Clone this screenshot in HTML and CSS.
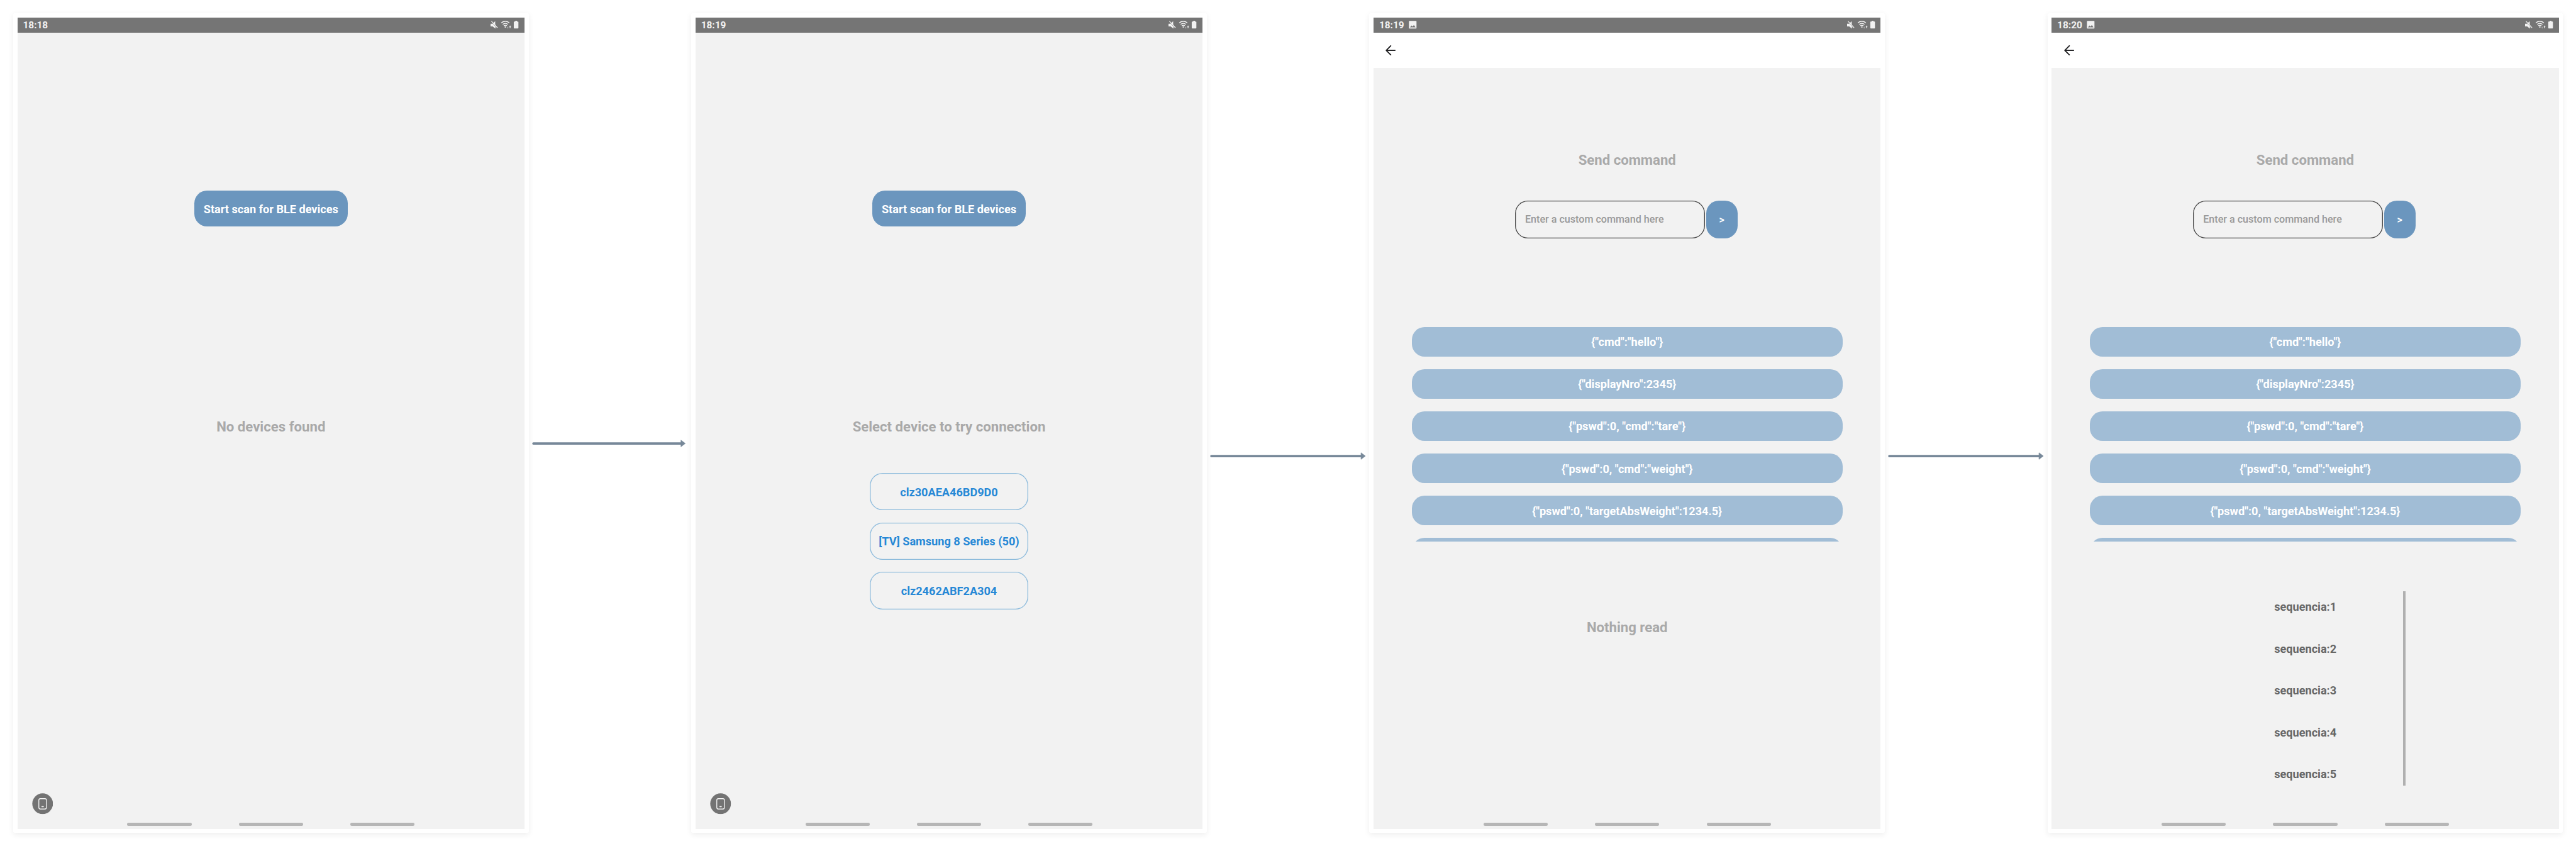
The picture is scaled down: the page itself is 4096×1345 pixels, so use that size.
FILE: index.html
```html
<!DOCTYPE html>
<html lang="en">
<head>
<meta charset="utf-8">
<title>BLE device flow</title>
<link rel="stylesheet" href="styles.css">
</head>
<body>
<svg class="defs" aria-hidden="true">
  <symbol id="i-status" viewBox="0 0 68 20">
    <path d="M0 7h4.5L11 1.2V11l5.2 5.3-1.2 1.2L11.5 14v4.5L5 13.5H0z" fill="#f2f2f2"/>
    <path d="M1.2 1.6L16 17.4" stroke="#757575" stroke-width="1.3"/>
    <path d="M2 .8L16.6 16.6" stroke="#f2f2f2" stroke-width="1.8"/>
    <g fill="none" stroke="#f2f2f2" stroke-width="2">
      <path d="M25.5 5.2a13 13 0 0 1 19 0"/>
      <path d="M28.8 8.8a8.6 8.6 0 0 1 12.4 0"/>
      <path d="M31.6 12a4.8 4.8 0 0 1 6.8 0"/>
    </g>
    <circle cx="35" cy="14.8" r="1.7" fill="#f2f2f2"/>
    <path d="M39.6 14h2v2h1.4l-2.4 2.6-2.4-2.6h1.4z" fill="#a9a9a9"/>
    <path d="M46.3 11l2.6 2.8h-1.6v3.6h-2v-3.6h-1.6z" fill="#f2f2f2"/>
    <path d="M58.6 0h4v1.8h2.2a1.2 1.2 0 0 1 1.2 1.2v14a1.2 1.2 0 0 1-1.2 1.2h-8.6A1.2 1.2 0 0 1 55 17V3a1.2 1.2 0 0 1 1.2-1.2h2.4z" fill="#f2f2f2"/>
  </symbol>
  <symbol id="i-image" viewBox="0 0 20 20">
    <path fill="#f2f2f2" fill-rule="evenodd" d="M2 .5h16a1.5 1.5 0 0 1 1.5 1.5v16a1.5 1.5 0 0 1-1.5 1.5H2A1.5 1.5 0 0 1 .5 18V2A1.5 1.5 0 0 1 2 .5zM3 16.5h14l-4.2-6-3.1 3.9L7 11.6z"/>
  </symbol>
  <symbol id="i-back" viewBox="0 0 24 24">
    <path d="M22.6 12H2M12.4 1.3L1.8 12l10.6 10.7" fill="none" stroke="#1c1c1e" stroke-width="2.7" stroke-linecap="round" stroke-linejoin="round"/>
  </symbol>
  <symbol id="i-rotate" viewBox="0 0 50 50">
    <circle cx="25" cy="25" r="24.5" fill="#737373"/>
    <rect x="16" y="13" width="18" height="24.6" rx="3.6" fill="none" stroke="#f4f4f4" stroke-width="2"/>
    <rect x="22.2" y="30.4" width="5.6" height="2.7" rx="1" fill="#f4f4f4"/>
  </symbol>
  <symbol id="i-arrow" viewBox="0 0 364 18">
    <path d="M3 9H354" stroke="#778899" stroke-width="5.6" stroke-linecap="round"/>
    <path d="M352.6 1.2L363 9l-10.4 7.8z" fill="#778899" stroke="#778899" stroke-width="1" stroke-linejoin="round"/>
  </symbol>
  <symbol id="i-arrow-long" viewBox="0 0 369 18">
    <path d="M3 9H359" stroke="#778899" stroke-width="5.6" stroke-linecap="round"/>
    <path d="M357.6 1.2L368 9l-10.4 7.8z" fill="#778899" stroke="#778899" stroke-width="1" stroke-linejoin="round"/>
  </symbol>
</svg>
<main class="flow">
  <section class="card"><div class="screen">
    <header class="status"><span>18:18</span><svg class="status-icons"><use href="#i-status"/></svg></header>
    <div class="body scan">
      <button class="primary">Start scan for BLE devices</button>
      <h2 class="title">No devices found</h2>
      <svg class="rotate"><use href="#i-rotate"/></svg>
    </div>
    <footer class="nav"><i></i><i></i><i></i></footer>
  </div></section>

  <svg class="link link-first"><use href="#i-arrow"/></svg>

  <section class="card"><div class="screen">
    <header class="status"><span>18:19</span><svg class="status-icons"><use href="#i-status"/></svg></header>
    <div class="body scan">
      <button class="primary">Start scan for BLE devices</button>
      <h2 class="title">Select device to try connection</h2>
      <div class="devices">
        <button class="device">clz30AEA46BD9D0</button>
        <button class="device">[TV] Samsung 8 Series (50)</button>
        <button class="device">clz2462ABF2A304</button>
      </div>
      <svg class="rotate"><use href="#i-rotate"/></svg>
    </div>
    <footer class="nav"><i></i><i></i><i></i></footer>
  </div></section>

  <svg class="link"><use href="#i-arrow-long"/></svg>

  <section class="card"><div class="screen">
    <header class="status"><span>18:19</span><svg class="status-image"><use href="#i-image"/></svg><svg class="status-icons"><use href="#i-status"/></svg></header>
    <div class="appbar"><svg class="back"><use href="#i-back"/></svg></div>
    <div class="body command">
      <h2 class="title">Send command</h2>
      <div class="entry"><div class="field">Enter a custom command here</div><button class="send">&gt;</button></div>
      <div class="presets">
        <button class="preset">{"cmd":"hello"}</button>
        <button class="preset">{"displayNro":2345}</button>
        <button class="preset">{"pswd":0, "cmd":"tare"}</button>
        <button class="preset">{"pswd":0, "cmd":"weight"}</button>
        <button class="preset">{"pswd":0, "targetAbsWeight":1234.5}</button>
        <button class="preset"></button>
      </div>
      <h2 class="title empty">Nothing read</h2>
    </div>
    <footer class="nav"><i></i><i></i><i></i></footer>
  </div></section>

  <svg class="link"><use href="#i-arrow-long"/></svg>

  <section class="card"><div class="screen">
    <header class="status"><span>18:20</span><svg class="status-image"><use href="#i-image"/></svg><svg class="status-icons"><use href="#i-status"/></svg></header>
    <div class="appbar"><svg class="back"><use href="#i-back"/></svg></div>
    <div class="body command">
      <h2 class="title">Send command</h2>
      <div class="entry"><div class="field">Enter a custom command here</div><button class="send">&gt;</button></div>
      <div class="presets">
        <button class="preset">{"cmd":"hello"}</button>
        <button class="preset">{"displayNro":2345}</button>
        <button class="preset">{"pswd":0, "cmd":"tare"}</button>
        <button class="preset">{"pswd":0, "cmd":"weight"}</button>
        <button class="preset">{"pswd":0, "targetAbsWeight":1234.5}</button>
        <button class="preset"></button>
      </div>
      <div class="log">
        <p>sequencia:1</p><p>sequencia:2</p><p>sequencia:3</p><p>sequencia:4</p><p>sequencia:5</p>
      </div>
    </div>
    <footer class="nav"><i></i><i></i><i></i></footer>
  </div></section>
</main>
</body>
</html>
```
FILE: styles.css
```css
/* 1rem = 100 design units; the board is 60.97rem wide */
html { font-size: 67.18px; }
* { box-sizing: border-box; }
body { margin: 0; background: #fff; font-family: Roboto, "Liberation Sans", sans-serif; font-size: .27rem; overflow: hidden; }
h2, p { margin: 0; }
button { font: inherit; font-weight: 700; border: 0; padding: .02rem 0 0; margin: 0; }
.defs { position: absolute; width: 0; height: 0; }
svg { display: block; flex: none; }

.flow { display: flex; align-items: flex-start; padding: .313rem 0 0 .313rem; width: 60.97rem; height: 20.02rem; }
.card { flex: none; width: 12.2rem; height: 19.4rem; padding: .1rem; border-radius: .04rem; background: #fff; box-shadow: 0 .04rem .14rem rgba(0, 0, 0, .07); }
.screen { display: flex; flex-direction: column; width: 12rem; height: 19.2rem; background: #f2f2f2; }
.link { width: 3.69rem; height: .18rem; margin: 10.385rem .084rem 0 .076rem; }
.link-first { width: 3.64rem; margin-top: 10.085rem; margin-right: .134rem; }

.status { display: flex; align-items: center; height: .36rem; padding: 0 .13rem; background: #757575; color: #f2f2f2; font-size: .23rem; font-weight: 700; line-height: .36rem; }
.status-image { width: .19rem; height: .19rem; margin-left: .11rem; }
.status-icons { width: .68rem; height: .2rem; margin: 0 -.01rem 0 auto; }
.appbar { display: flex; align-items: center; height: .84rem; padding: .01rem .285rem 0; background: #fff; }
.back { width: .24rem; height: .24rem; }

.body { position: relative; flex: 1; display: flex; flex-direction: column; align-items: center; }
.title { color: #a9a9a9; font-size: .33rem; line-height: .44rem; font-weight: 700; }
.primary { width: 3.64rem; height: .85rem; border-radius: .3rem; background: #6b96be; color: #fff; }
.scan .primary { margin-top: 3.74rem; }
.scan .title { margin-top: 4.52rem; }
.devices { display: flex; flex-direction: column; gap: .29rem; margin-top: .87rem; }
.device { width: 3.76rem; height: .883rem; box-shadow: inset 0 0 0 .02rem #8dbbdc; border-radius: .3rem; background: transparent; color: #2688d6; }
.rotate { position: absolute; left: .345rem; bottom: .2rem; width: .5rem; height: .5rem; }

.command .title { margin-top: 1.955rem; }
.entry { display: flex; gap: .025rem; margin-top: .735rem; margin-right: .04rem; }
.field { width: 4.49rem; height: .906rem; padding: .01rem 0 0 .235rem; box-shadow: inset 0 0 0 .02rem #4a4a4a; border-radius: .3rem; color: #999; font-size: .24rem; font-weight: 500; line-height: .906rem; }
.send { width: .745rem; height: .906rem; border-radius: .3rem; background: #6b96be; color: #fff; font-size: .24rem; }
.presets { display: flex; flex-direction: column; gap: .3rem; width: 10.2rem; height: 5.086rem; margin-top: 2.085rem; overflow: hidden; }
.preset { flex: none; height: .7rem; border-radius: .3rem; background: #a1bdd6; color: #fff; }
.command .empty { margin-top: 1.815rem; }
.log { width: 4.75rem; height: 4.6rem; margin-top: 1.18rem; padding-left: .066rem; border-right: .066rem solid #b0b0b0; color: #666; font-weight: 700; text-align: center; }
.log p { height: .99rem; line-height: .74rem; }

.nav { display: flex; justify-content: center; gap: 1.12rem; height: .14rem; }
.nav i { width: 1.52rem; height: .066rem; border-radius: .033rem; background: #b6b6b6; }
```
